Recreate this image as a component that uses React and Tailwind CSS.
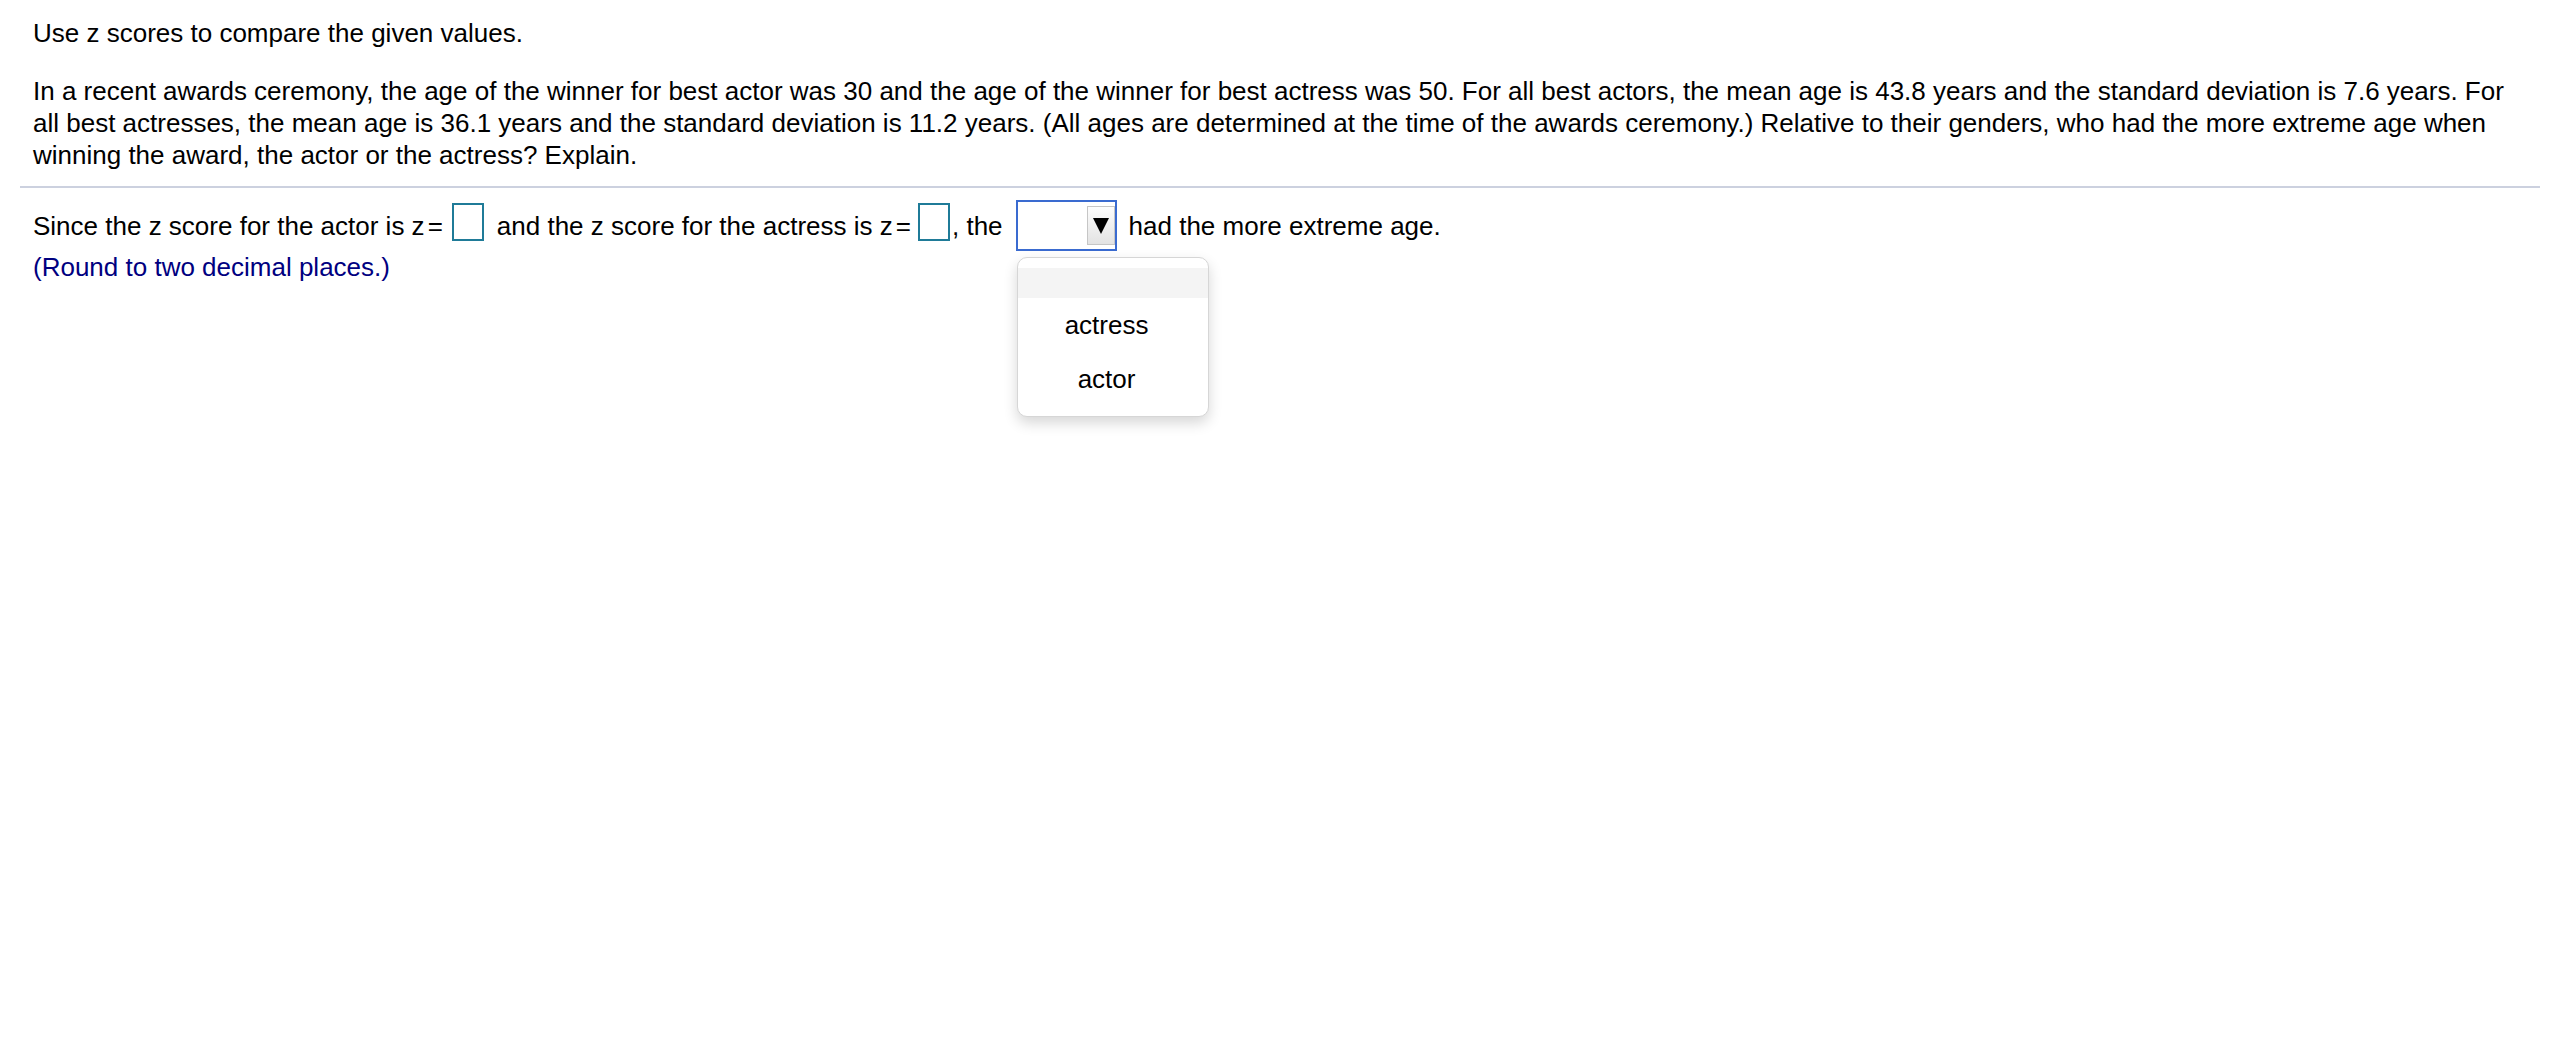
import { useState } from 'react';

const OPCIONES = ['actress', 'actor'];

function Casilla() {
  return <span className="inline-block w-[32px] h-[38px] border-2 border-[#1f7b98] bg-white shrink-0" />;
}

function Selector() {
  const [abierto] = useState(true);

  return (
    <div className="relative ml-[13px] w-[101px] h-[51px] border-2 border-[#3a6bd0] bg-white flex items-center justify-end shrink-0">
      <span className="w-[28px] h-[39px] border border-[#c6c6c6] bg-gradient-to-b from-[#fdfdfd] to-[#e3e3e3] flex items-center justify-center">
        <svg width="16" height="18" viewBox="0 0 16 18">
          <polygon points="0,1 16,1 8,17" fill="#000" />
        </svg>
      </span>
      {abierto && (
        <div className="absolute left-[-1px] top-[55px] z-10 w-[192px] rounded-[10px] border border-[#d6d6d6] bg-white py-[10px] shadow-[0_6px_14px_rgba(0,0,0,0.16)]">
          <div className="h-[30px] bg-[#f4f4f4]" />
          {OPCIONES.map((o) => (
            <div key={o} className="h-[54px] flex items-center justify-center pr-[12px]">
              {o}
            </div>
          ))}
        </div>
      )}
    </div>
  );
}

export default function App() {
  return (
    <div className="min-h-screen bg-white text-black font-['Liberation_Sans',Arial,sans-serif] text-[26px] leading-[32px]">
      <div className="px-[20px]">
        <p className="px-[13px] pt-[17px]">Use z scores to compare the given values.</p>
        <p className="px-[13px] mt-[26px]">
          In a recent awards ceremony, the age of the winner for best actor was 30 and the age of the winner for best actress was 50. For all best actors, the mean age is 43.8 years and the standard deviation is 7.6 years. For all best actresses, the mean age is 36.1 years and the standard deviation is 11.2 years. (All ages are determined at the time of the awards ceremony.) Relative to their genders, who had the more extreme age when winning the award, the actor or the actress? Explain.
        </p>
        <div className="mt-[15px] h-[2px] bg-[#ccd1df]" />
        <div className="pl-[13px] mt-[12px] h-[51px] flex items-center whitespace-nowrap">
          <span>Since the z score for the actor is z</span>
          <span className="ml-[3px]">=</span>
          <span className="ml-[9px]"><Casilla /></span>
          <span className="ml-[13px]">and the z score for the actress is z</span>
          <span className="ml-[3px]">=</span>
          <span className="ml-[7px]"><Casilla /></span>
          <span className="ml-[2px]">, the</span>
          <Selector />
          <span className="ml-[12px]">had the more extreme age.</span>
        </div>
        <p className="px-[13px] text-[#000080]">(Round to two decimal places.)</p>
      </div>
    </div>
  );
}
